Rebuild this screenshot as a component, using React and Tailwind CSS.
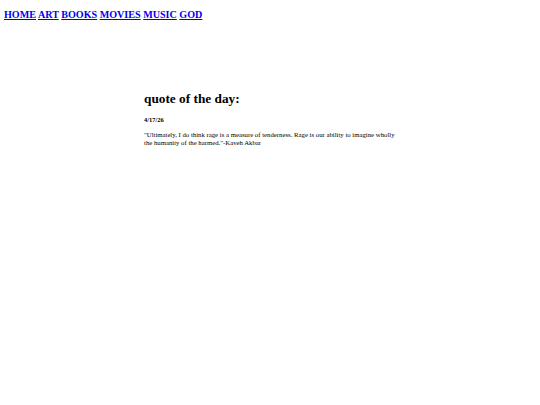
import React from "react";

const links = ["HOME", "ART", "BOOKS", "MOVIES", "MUSIC", "GOD"];

const App = () => {
  return (
    <div className="min-h-screen bg-white text-black font-['Liberation_Serif','Times_New_Roman',serif]">
      <nav className="px-[4px] pt-[9px] text-[10.1px] font-bold leading-[12px]">
        {links.map((l, i) => (
          <React.Fragment key={l}>
            <a href="#" className="text-[#0000ee] underline">{l}</a>
            {i < links.length - 1 && " "}
          </React.Fragment>
        ))}
      </nav>

      <main className="mx-auto mt-[70px] w-[252px]">
        <h1 className="text-[13.3px] font-bold leading-[16px]">quote of the day:</h1>
        <p className="mt-[9px] text-[6.5px] font-bold leading-[8px]">4/17/26</p>
        <p className="mt-[7px] text-[6.75px] leading-[8px]">
          "Ultimately, I do think rage is a measure of tenderness. Rage is our ability to imagine wholly the humanity of the harmed."-Kaveh Akbar
        </p>
      </main>
    </div>
  );
};

export default App;
